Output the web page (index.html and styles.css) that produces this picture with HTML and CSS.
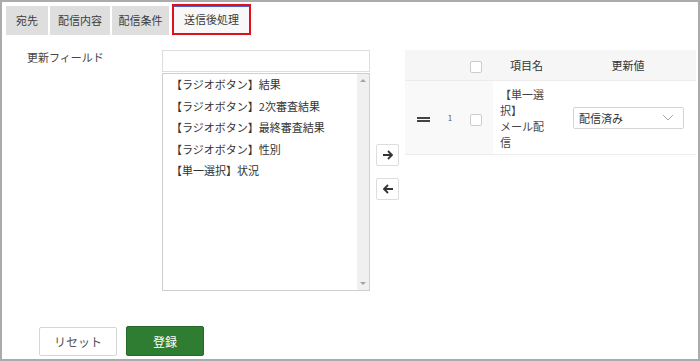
FILE: index.html
```html
<!DOCTYPE html>
<html lang="ja">
<head>
    <meta charset="UTF-8">
    <meta name="viewport" content="width=device-width, initial-scale=1.0">
    <title>送信後処理</title>
    <link rel="stylesheet" href="styles.css">
</head>
<body>
    <div class="frame">
        <div class="tabs">
            <div class="tab tab-short">宛先</div>
            <div class="tab tab-wide">配信内容</div>
            <div class="tab">配信条件</div>
            <div class="tab active">送信後処理</div>
        </div>

        <div class="content">
            <div class="field-label">更新フィールド</div>

            <div class="field-picker">
                <input class="search" type="text">
                <div class="list-box">
                    <ul class="list">
                        <li>【ラジオボタン】結果</li>
                        <li>【ラジオボタン】2次審査結果</li>
                        <li>【ラジオボタン】最終審査結果</li>
                        <li>【ラジオボタン】性別</li>
                        <li>【単一選択】状況</li>
                    </ul>
                    <div class="scrollbar">
                        <span class="arrow-up"></span>
                        <span class="arrow-down"></span>
                    </div>
                </div>
            </div>

            <div class="move-buttons">
                <button class="move">
                    <svg width="12" height="12" viewBox="0 0 12 12"><path d="M1 6h9M6 2l4 4-4 4" fill="none" stroke="#333" stroke-width="1.8"/></svg>
                </button>
                <button class="move">
                    <svg width="12" height="12" viewBox="0 0 12 12"><path d="M11 6H2M6 2L2 6l4 4" fill="none" stroke="#333" stroke-width="1.8"/></svg>
                </button>
            </div>

            <table class="update-table">
                <thead>
                    <tr>
                        <th class="col-handle"></th>
                        <th class="col-num"></th>
                        <th class="col-check"><span class="checkbox"></span></th>
                        <th class="col-name">項目名</th>
                        <th class="col-value">更新値</th>
                    </tr>
                </thead>
                <tbody>
                    <tr>
                        <td class="col-handle"><span class="handle"></span></td>
                        <td class="col-num">1</td>
                        <td class="col-check"><span class="checkbox"></span></td>
                        <td class="col-name"><div class="name-text">【単一選<br>択】<br>メール配<br>信</div></td>
                        <td class="col-value">
                            <div class="select">
                                <span>配信済み</span>
                                <svg width="12" height="7" viewBox="0 0 12 7"><polyline points="1,1 6,6 11,1" fill="none" stroke="#aaa" stroke-width="1"/></svg>
                            </div>
                        </td>
                    </tr>
                </tbody>
            </table>
        </div>

        <div class="actions">
            <button class="btn btn-reset">リセット</button>
            <button class="btn btn-submit">登録</button>
        </div>
    </div>
</body>
</html>
```

FILE: styles.css
```css
body {
    margin: 0;
    font-family: "Noto Sans CJK JP", "Noto Sans", sans-serif;
    font-size: 11px;
    color: #333;
    background: #fff;
}
.frame {
    width: 700px;
    height: 361px;
    box-sizing: border-box;
    border: 2px solid #ababab;
    display: flex;
    flex-direction: column;
}
.tabs {
    display: flex;
    align-items: flex-end;
    gap: 2px;
    margin-top: 2px;
    padding-left: 4px;
}
.tab {
    width: 57px;
    height: 29px;
    line-height: 29px;
    text-align: center;
    background: #dedede;
    color: #3c3c3c;
}
.tab-short {
    width: 42px;
}
.tab-wide {
    width: 60px;
}
.active {
    width: 75px;
    height: 27px;
    line-height: 27px;
    margin-left: 1px;
    background: #f8f8f8;
    border: 2px solid #e3101c;
    box-shadow: inset 0 1px 0 #4a63c8;
}
.content {
    display: flex;
    align-items: flex-start;
    margin-top: 15px;
}
.field-label {
    width: 135px;
    margin-left: 25px;
    line-height: 14px;
    color: #444;
}
.field-picker {
    width: 208px;
    display: flex;
    flex-direction: column;
    gap: 1px;
}
.search {
    box-sizing: border-box;
    width: 208px;
    height: 22px;
    margin: 0;
    border: 1px solid #ddd;
}
.list-box {
    box-sizing: border-box;
    height: 218px;
    border: 1px solid #cfcfcf;
    display: flex;
}
.list {
    flex: 1;
    list-style: none;
    margin: 0;
    padding: 0 0 0 8px;
}
.list li {
    height: 21.5px;
    line-height: 21.5px;
    white-space: nowrap;
}
.scrollbar {
    width: 12px;
    background: #f0f0f0;
    display: flex;
    flex-direction: column;
    justify-content: space-between;
    align-items: center;
    padding: 5px 0;
}
.arrow-up {
    border: 3px solid transparent;
    border-bottom-color: #a3a3a3;
    border-top: 0;
}
.arrow-down {
    border: 3px solid transparent;
    border-top-color: #a3a3a3;
    border-bottom: 0;
}
.move-buttons {
    display: flex;
    flex-direction: column;
    gap: 12px;
    margin: 94px 0 0 6px;
}
.move {
    width: 23px;
    height: 22px;
    padding: 0;
    border: 1px solid #ddd;
    border-radius: 2px;
    background: #fff;
    display: flex;
    align-items: center;
    justify-content: center;
}
.update-table {
    width: 291px;
    margin-left: 6px;
    border-collapse: collapse;
    table-layout: fixed;
}
.update-table th {
    height: 30px;
    padding: 0;
    background: #f6f6f6;
    border-bottom: 1px solid #ececec;
    font-weight: normal;
    color: #333;
}
.update-table td {
    height: 73px;
    padding: 0;
    text-align: center;
    background: #f9f9f9;
    border-bottom: 1px solid #ececec;
}
.col-handle { width: 36px; }
.col-num { width: 18px; }
.col-check { width: 34px; }
.col-name { width: 67px; }
.update-table td.col-name,
.update-table td.col-value {
    background: #fff;
}
.update-table td.col-num {
    font-size: 8px;
    color: #556;
}
.handle {
    display: inline-block;
    width: 13px;
    height: 1px;
    border-top: 2px solid #444;
    border-bottom: 2px solid #444;
    vertical-align: middle;
}
.checkbox {
    display: inline-block;
    box-sizing: border-box;
    width: 12px;
    height: 12px;
    border: 1px solid #ccc;
    border-radius: 2px;
    background: #fff;
    vertical-align: middle;
}
.name-text {
    margin-left: 7px;
    text-align: left;
    line-height: 16px;
    color: #444;
}
.select {
    box-sizing: border-box;
    width: 111px;
    height: 22px;
    margin-left: 13px;
    padding: 0 9px 0 5px;
    border: 1px solid #d4d4d4;
    border-radius: 2px;
    display: flex;
    align-items: center;
    justify-content: space-between;
    text-align: left;
}
.actions {
    display: flex;
    gap: 9px;
    margin: 35px 0 0 37px;
}
.btn {
    width: 78px;
    height: 30px;
    font-family: "Noto Sans CJK JP", sans-serif;
    font-size: 12px;
    border-radius: 2px;
}
.btn-reset {
    margin-top: 1px;
    height: 29px;
    background: #fff;
    border: 1px solid #d6d6d6;
    color: #555;
}
.btn-submit {
    background: #2e7d32;
    border: 1px solid #256a29;
    color: #fff;
}
```
